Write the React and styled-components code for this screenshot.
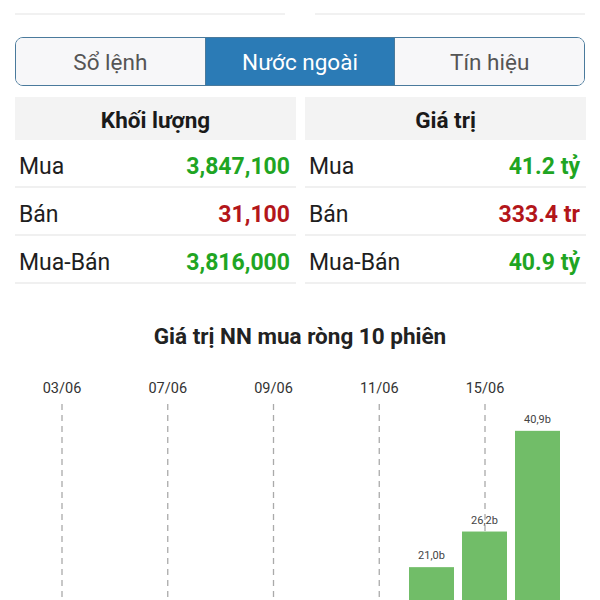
import React from "react";
import styled, { createGlobalStyle } from "styled-components";

const GlobalStyle = createGlobalStyle`
  body {
    margin: 0;
    background: #fff;
    font-family: Roboto, "Noto Sans", sans-serif;
  }
`;

const tabs = ["Sổ lệnh", "Nước ngoài", "Tín hiệu"];

const volume = [
  { label: "Mua", value: "3,847,100", up: true },
  { label: "Bán", value: "31,100", up: false },
  { label: "Mua-Bán", value: "3,816,000", up: true },
];

const amount = [
  { label: "Mua", value: "41.2 tỷ", up: true },
  { label: "Bán", value: "333.4 tr", up: false },
  { label: "Mua-Bán", value: "40.9 tỷ", up: true },
];

const dates = ["03/06", "07/06", "09/06", "11/06", "15/06"];
const bars = [
  { x: 409, v: 21.0, label: "21,0b" },
  { x: 462, v: 26.2, label: "26,2b" },
  { x: 515, v: 40.9, label: "40,9b" },
];

const App = () => {
  const [active, setActive] = React.useState(1);

  const base = 340; // chart svg y of zero line (below the window)
  const scale = 6.85;

  return (
    <>
      <GlobalStyle />
      <Page>
        <TopRow>
          <TopCell />
          <TopCell />
        </TopRow>

        <Tabs>
          {tabs.map((t, i) => (
            <Tab key={t} $active={i === active} onClick={() => setActive(i)}>
              {t}
            </Tab>
          ))}
        </Tabs>

        <Tables>
          <Panel>
            <Head>Khối lượng</Head>
            {volume.map((r) => (
              <Row key={r.label}>
                <Label>{r.label}</Label>
                <Value $up={r.up}>{r.value}</Value>
              </Row>
            ))}
          </Panel>
          <Panel>
            <Head>Giá trị</Head>
            {amount.map((r) => (
              <Row key={r.label}>
                <Label>{r.label}</Label>
                <Value $up={r.up}>{r.value}</Value>
              </Row>
            ))}
          </Panel>
        </Tables>

        <ChartTitle>Giá trị NN mua ròng 10 phiên</ChartTitle>

        <Chart width="600" height="250" viewBox="0 0 600 250">
          {dates.map((d, i) => {
            const x = 62 + i * 105.75;
            return (
              <g key={d}>
                <text x={x} y="22" textAnchor="middle" fontSize="14.5" fill="#333" fontFamily="Roboto, sans-serif">
                  {d}
                </text>
                <line x1={x} y1="33" x2={x} y2="250" stroke="#aaa" strokeWidth="1.3" strokeDasharray="6 5" />
              </g>
            );
          })}
          {bars.map((b) => {
            const top = base - b.v * scale;
            return (
              <g key={b.label}>
                <rect x={b.x} y={top} width="45" height={250 - top} fill="#71bd68" />
                <text x={b.x + 22.5} y={top - 8} textAnchor="middle" fontSize="11" fill="#444" fontFamily="Roboto, sans-serif">
                  {b.label}
                </text>
              </g>
            );
          })}
        </Chart>
      </Page>
    </>
  );
};
export default App;

const Page = styled.div`
  width: 600px;
  height: 600px;
  overflow: hidden;
`;

const TopRow = styled.div`
  display: flex;
  gap: 30px;
  padding: 0 15px;
`;

const TopCell = styled.div`
  flex: 1;
  height: 13px;
  border-bottom: 2px solid #f1f1f1;
`;

const Tabs = styled.div`
  display: flex;
  margin: 22px 15px 0;
  height: 49px;
  box-sizing: border-box;
  border: 1.5px solid #4a7a9c;
  border-radius: 8px;
  overflow: hidden;
`;

const Tab = styled.div`
  flex: 1;
  display: flex;
  align-items: center;
  justify-content: center;
  padding-top: 1px;
  font-size: 22.5px;
  color: ${(p) => (p.$active ? "#fff" : "#555")};
  background: ${(p) => (p.$active ? "#2b7bb6" : "#f7f7f9")};
  & + & {
    border-left: 1px solid #4a7a9c;
  }
`;

const Tables = styled.div`
  display: grid;
  grid-template-columns: 281px 281px;
  gap: 9px;
  padding: 11px 0 0 15px;
`;

const Panel = styled.div`
  display: flex;
  flex-direction: column;
`;

const Head = styled.div`
  height: 43px;
  display: flex;
  align-items: center;
  justify-content: center;
  padding-top: 2px;
  box-sizing: border-box;
  background: #f3f3f3;
  font-size: 22.5px;
  font-weight: 700;
  color: #1a1a1a;
`;

const Row = styled.div`
  height: 48px;
  box-sizing: border-box;
  display: flex;
  align-items: center;
  justify-content: space-between;
  padding: 6px 6px 0 4px;
  border-bottom: 2px solid #f0f0f0;
`;

const Label = styled.span`
  font-size: 23px;
  color: #1e1e1e;
`;

const Value = styled.span`
  font-size: 23px;
  font-weight: 700;
  color: ${(p) => (p.$up ? "#1fa523" : "#b3161a")};
`;

const ChartTitle = styled.div`
  margin-top: 39px;
  text-align: center;
  font-size: 22.5px;
  font-weight: 700;
  color: #222;
`;

const Chart = styled.svg`
  display: block;
  margin-top: 22px;
`;
